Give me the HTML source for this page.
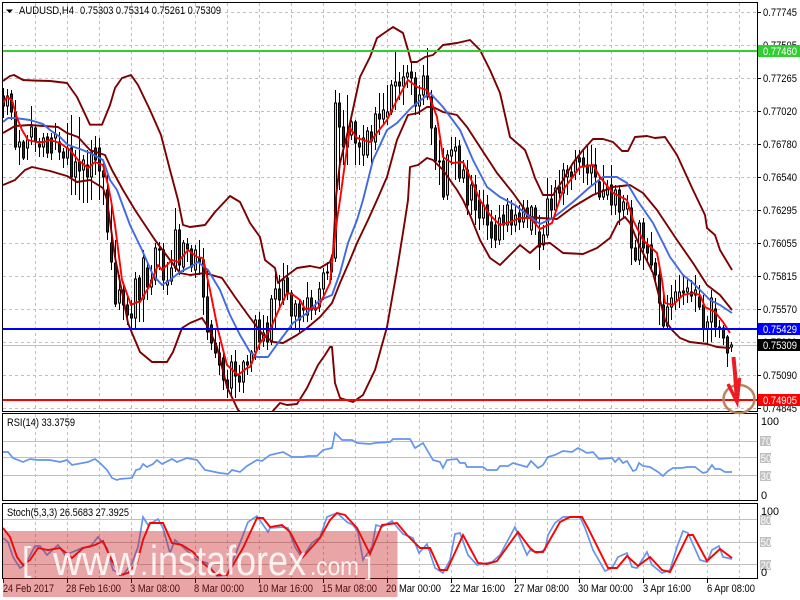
<!DOCTYPE html>
<html><head><meta charset="utf-8"><style>
html,body{margin:0;padding:0;background:#fff}
svg{display:block}
text{font-family:"Liberation Sans",sans-serif;font-size:11px;fill:#000}
.w{fill:#fff}
</style></head><body>
<svg width="800" height="600" viewBox="0 0 800 600" xmlns="http://www.w3.org/2000/svg" style="overflow:hidden">
<defs><clipPath id="m"><rect x="3" y="3" width="754" height="408"/></clipPath></defs>
<rect width="800" height="600" fill="#fff"/>
<!-- grid -->
<g stroke="#c0c0c0" fill="none" stroke-dasharray="3 3" shape-rendering="crispEdges">
<path d="M3 12.5H757M3 45.5H757M3 78.5H757M3 111.5H757M3 144.5H757M3 177.5H757M3 210.5H757M3 243.5H757M3 276.5H757M3 309.5H757M3 342.5H757M3 375.5H757M3 408.5H757"/>
<path d="M35.5 3V411M67.5 3V411M99.5 3V411M131.5 3V411M163.5 3V411M195.5 3V411M227.5 3V411M259.5 3V411M291.5 3V411M323.5 3V411M355.5 3V411M387.5 3V411M419.5 3V411M451.5 3V411M483.5 3V411M515.5 3V411M547.5 3V411M579.5 3V411M611.5 3V411M643.5 3V411M675.5 3V411M707.5 3V411M739.5 3V411"/>
<path d="M35.5 414V500M67.5 414V500M99.5 414V500M131.5 414V500M163.5 414V500M195.5 414V500M227.5 414V500M259.5 414V500M291.5 414V500M323.5 414V500M355.5 414V500M387.5 414V500M419.5 414V500M451.5 414V500M483.5 414V500M515.5 414V500M547.5 414V500M579.5 414V500M611.5 414V500M643.5 414V500M675.5 414V500M707.5 414V500M739.5 414V500"/>
<path d="M35.5 504V578M67.5 504V578M99.5 504V578M131.5 504V578M163.5 504V578M195.5 504V578M227.5 504V578M259.5 504V578M291.5 504V578M323.5 504V578M355.5 504V578M387.5 504V578M419.5 504V578M451.5 504V578M483.5 504V578M515.5 504V578M547.5 504V578M579.5 504V578M611.5 504V578M643.5 504V578M675.5 504V578M707.5 504V578M739.5 504V578"/>
</g>
<path d="M3 345.5H757" stroke="#c0c0c0" shape-rendering="crispEdges"/>
<!-- levels -->
<g stroke="#c0c0c0" stroke-width="1" shape-rendering="crispEdges">
<path d="M3 441.5H757M3 457.5H757M3 475.5H757M3 519.5H757M3 542.5H757M3 564.5H757"/>
</g>
<!-- candles -->
<g clip-path="url(#m)" shape-rendering="crispEdges">
<path fill="none" stroke="#000" d="M3.5 88V118M7.5 89V115M11.5 90V120M15.5 100V150M19.5 130V165M23.5 140V160M27.5 135V160M31.5 106V145M35.5 125V152M39.5 138V157M43.5 133V157M47.5 133V158M51.5 133V160M55.5 123V150M59.5 132V160M63.5 148V168M67.5 123V165M71.5 115V195M75.5 150V195M79.5 117V200M83.5 155V203M87.5 150V203M91.5 140V200M95.5 136V175M99.5 138V200M103.5 160V205M107.5 175V240M111.5 205V270M115.5 240V307M119.5 275V310M123.5 282V320M127.5 295V325M131.5 300V328M135.5 272V329M139.5 275V322M143.5 250V322M147.5 262V300M151.5 265V295M155.5 243V285M159.5 242V270M163.5 243V290M167.5 262V295M171.5 250V285M175.5 208V272M179.5 224V275M183.5 240V272M187.5 238V262M191.5 245V272M195.5 245V278M199.5 240V275M203.5 248V315M207.5 270V340M211.5 320V350M215.5 330V358M219.5 342V375M223.5 350V390M227.5 370V398M231.5 355V398M235.5 350V398M239.5 365V392M243.5 360V393M247.5 355V375M251.5 350V372M255.5 315V360M259.5 312V350M263.5 315V347M267.5 316V350M271.5 295V345M275.5 268V330M279.5 275V310M283.5 263V305M287.5 265V300M291.5 290V330M295.5 300V330M299.5 300V332M303.5 300V322M307.5 282V322M311.5 290V320M315.5 300V315M319.5 282V312M323.5 268V300M327.5 262V280M331.5 255V280M335.5 90V262M339.5 93V190M343.5 110V165M347.5 95V165M351.5 120V140M355.5 120V165M359.5 135V165M363.5 125V166M367.5 127V158M371.5 125V163M375.5 107V150M379.5 93V135M383.5 93V125M387.5 85V125M391.5 80V115M395.5 52V110M399.5 72V100M403.5 65V105M407.5 65V88M411.5 62V95M415.5 72V115M419.5 85V115M423.5 65V105M427.5 48V100M431.5 90V145M435.5 125V170M439.5 140V185M443.5 148V200M447.5 150V200M451.5 137V165M455.5 137V180M459.5 140V182M463.5 160V183M467.5 160V215M471.5 175V215M475.5 175V225M479.5 190V230M483.5 190V225M487.5 195V240M491.5 210V248M495.5 215V248M499.5 205V245M503.5 205V240M507.5 198V232M511.5 200V235M515.5 205V232M519.5 205V230M523.5 200V228M527.5 200V228M531.5 205V235M535.5 205V235M539.5 215V270M543.5 225V250M547.5 178V238M551.5 185V218M555.5 180V215M559.5 170V200M563.5 163V205M567.5 165V195M571.5 165V190M575.5 150V180M579.5 150V175M583.5 150V183M587.5 145V185M591.5 145V185M595.5 148V195M599.5 175V200M603.5 165V200M607.5 180V200M611.5 165V215M615.5 185V215M619.5 185V225M623.5 195V218M627.5 195V215M631.5 200V265M635.5 240V262M639.5 220V265M643.5 218V270M647.5 238V262M651.5 232V272M655.5 258V285M659.5 270V325M663.5 295V330M667.5 295V330M671.5 285V320M675.5 280V310M679.5 275V308M683.5 275V305M687.5 278V303M691.5 280V302M695.5 275V312M699.5 285V310M703.5 295V342M707.5 316V345M711.5 290V342M715.5 298V337M719.5 320V338M723.5 325V345M727.5 335V367M731.5 342V352"/>
<path fill="#adff2f" stroke="#000" d="M6.5 96h2V106h-2zM18.5 142h2V147h-2zM26.5 140h2V148h-2zM30.5 127h2V137h-2zM42.5 138h2V147h-2zM54.5 134h2V138h-2zM66.5 148h2V158h-2zM74.5 162h2V177h-2zM82.5 160h2V170h-2zM90.5 152h2V177h-2zM118.5 290h2V303h-2zM134.5 279h2V318h-2zM142.5 258h2V299h-2zM150.5 280h2V287h-2zM154.5 248h2V280h-2zM166.5 281h2V285h-2zM170.5 268h2V281h-2zM174.5 230h2V268h-2zM182.5 243h2V267h-2zM194.5 250h2V270h-2zM230.5 362h2V388h-2zM242.5 362h2V382h-2zM250.5 352h2V363h-2zM254.5 320h2V352h-2zM262.5 333h2V341h-2zM270.5 299h2V342h-2zM274.5 289h2V299h-2zM282.5 280h2V300h-2zM294.5 304h2V316h-2zM306.5 298h2V315h-2zM314.5 308h2V310h-2zM318.5 289h2V307h-2zM322.5 273h2V289h-2zM330.5 260h2V272h-2zM334.5 103h2V258h-2zM346.5 135h2V147h-2zM350.5 122h2V135h-2zM362.5 138h2V155h-2zM366.5 131h2V155h-2zM374.5 114h2V142h-2zM382.5 110h2V119h-2zM386.5 112h2V117h-2zM390.5 85h2V112h-2zM394.5 82h2V86h-2zM402.5 77h2V86h-2zM406.5 73h2V77h-2zM418.5 95h2V106h-2zM422.5 76h2V95h-2zM446.5 155h2V195h-2zM450.5 150h2V156h-2zM454.5 147h2V151h-2zM462.5 170h2V178h-2zM470.5 185h2V200h-2zM482.5 205h2V218h-2zM498.5 218h2V240h-2zM506.5 205h2V225h-2zM514.5 215h2V225h-2zM522.5 208h2V222h-2zM530.5 207h2V230h-2zM542.5 235h2V245h-2zM546.5 199h2V235h-2zM554.5 188h2V210h-2zM562.5 170h2V193h-2zM566.5 170h2V177h-2zM574.5 160h2V172h-2zM590.5 165h2V173h-2zM602.5 190h2V197h-2zM606.5 187h2V195h-2zM614.5 190h2V205h-2zM622.5 202h2V210h-2zM626.5 203h2V209h-2zM638.5 223h2V260h-2zM666.5 307h2V326h-2zM670.5 298h2V307h-2zM674.5 292h2V302h-2zM678.5 292h2V298h-2zM686.5 288h2V292h-2zM694.5 290h2V295h-2zM706.5 322h2V329h-2zM710.5 298h2V322h-2zM730.5 345h2V347h-2z"/>
<path fill="#8b0000" stroke="#000" d="M2.5 96h2V106h-2zM10.5 94h2V112h-2zM14.5 112h2V147h-2zM22.5 142h2V158h-2zM34.5 128h2V142h-2zM38.5 144h2V147h-2zM46.5 137h2V153h-2zM50.5 138h2V153h-2zM58.5 142h2V152h-2zM62.5 152h2V158h-2zM70.5 148h2V177h-2zM78.5 162h2V171h-2zM86.5 165h2V177h-2zM94.5 148h2V160h-2zM98.5 148h2V171h-2zM102.5 171h2V177h-2zM106.5 190h2V232h-2zM110.5 243h2V262h-2zM114.5 263h2V304h-2zM122.5 290h2V305h-2zM126.5 305h2V315h-2zM130.5 314h2V318h-2zM138.5 278h2V300h-2zM146.5 268h2V287h-2zM158.5 249h2V250h-2zM162.5 250h2V280h-2zM178.5 230h2V265h-2zM186.5 244h2V249h-2zM190.5 249h2V267h-2zM198.5 258h2V262h-2zM202.5 260h2V297h-2zM206.5 297h2V332h-2zM210.5 325h2V343h-2zM214.5 343h2V353h-2zM218.5 353h2V365h-2zM222.5 358h2V380h-2zM226.5 380h2V388h-2zM234.5 362h2V376h-2zM238.5 376h2V382h-2zM246.5 362h2V365h-2zM258.5 320h2V342h-2zM266.5 323h2V342h-2zM278.5 289h2V300h-2zM286.5 278h2V292h-2zM290.5 293h2V316h-2zM298.5 304h2V320h-2zM302.5 308h2V310h-2zM310.5 298h2V310h-2zM326.5 272h2V273h-2zM338.5 103h2V127h-2zM342.5 127h2V147h-2zM354.5 122h2V143h-2zM358.5 143h2V147h-2zM370.5 132h2V141h-2zM378.5 114h2V119h-2zM398.5 82h2V86h-2zM410.5 72h2V78h-2zM414.5 78h2V106h-2zM426.5 76h2V97h-2zM430.5 97h2V128h-2zM434.5 128h2V161h-2zM438.5 161h2V162h-2zM442.5 161h2V197h-2zM458.5 146h2V178h-2zM466.5 170h2V205h-2zM474.5 185h2V210h-2zM478.5 200h2V218h-2zM486.5 205h2V225h-2zM490.5 222h2V238h-2zM494.5 225h2V240h-2zM502.5 215h2V225h-2zM510.5 210h2V225h-2zM518.5 213h2V222h-2zM526.5 208h2V218h-2zM534.5 208h2V223h-2zM538.5 232h2V247h-2zM550.5 199h2V210h-2zM558.5 187h2V193h-2zM570.5 172h2V177h-2zM578.5 158h2V162h-2zM582.5 158h2V167h-2zM586.5 165h2V173h-2zM594.5 165h2V177h-2zM598.5 182h2V197h-2zM610.5 185h2V205h-2zM618.5 190h2V212h-2zM630.5 208h2V248h-2zM634.5 248h2V260h-2zM642.5 223h2V248h-2zM646.5 245h2V253h-2zM650.5 245h2V265h-2zM654.5 263h2V275h-2zM658.5 275h2V303h-2zM662.5 305h2V326h-2zM682.5 291h2V293h-2zM690.5 292h2V296h-2zM698.5 297h2V307h-2zM702.5 305h2V329h-2zM714.5 309h2V327h-2zM718.5 327h2V329h-2zM722.5 328h2V338h-2zM726.5 337h2V353h-2z"/>
</g>
<!-- bands and MAs -->
<g clip-path="url(#m)" fill="none" stroke-width="1.9" stroke-linejoin="round">
<g stroke="#7d0000">
<polyline points="3,81 10,76 14,75 23,80 33,80.5 50,81 67,83 77,97 90,124.7 102,124.7 110,105 115,88 122,78 131,75 138,85 150,110 161,135 170,170 178,200 183,225 190,227 205,225 215,212 230,196 240,202 250,223 260,237 265,260 275,268 278,283 285,277 297,268 310,266 320,268 330,262 333,253 336,197 340,163 350,123 360,77 370,57 377,38 393,27 403,33 408,50 411,62 417,62 425,57 433,55 443,45 457,43 470,40 480,50 490,70 500,93 510,137 525,150 530,163 535,178 543,195 553,195 563,180 573,163 583,150 593,139 603,139 613,142 622,151 628,151 635,137 647,136 655,138 665,137 677,155 693,190 705,215 707,228 715,235 720,250 732,270"/>
<polyline points="3,133 15,126 30,125 58,127 67,133 78,137 90,150 105,155 112,170 123,190 135,210 145,225 155,240 170,260 180,273 190,275 205,273 222,278 235,297 248,315 263,335 273,342 283,343 297,335 307,328 320,317 332,303 340,283 350,260 357,243 368,220 377,200 387,177 397,140 408,115 418,113 427,107 433,107 443,112 457,115 467,127 480,147 497,173 513,193 518,200 530,217 540,218 557,219 573,207 593,195 613,187 630,185 643,193 657,210 677,240 693,263 707,285 720,295 732,310"/>
<polyline points="3,185 15,180 25,170 32,167 50,171 67,176 77,182 90,180 103,188 107,200 115,257 123,297 128,323 132,333 140,352 152,362 167,362 173,352 182,328 190,323 202,318 208,327 217,347 227,387 238,410 250,420 272,412 280,403 287,405 297,404 307,388 318,365 325,355 330,347 332,347 335,383 340,398 353,402 363,395 375,370 387,327 397,270 405,220 408,200 410,167 418,165 427,158 433,160 443,170 457,190 463,200 470,215 480,240 490,258 500,265 510,255 520,245 530,253 540,244 550,243 563,253 583,254 597,248 610,238 618,222 625,217 630,223 640,247 653,273 660,300 665,320 672,330 680,338 690,342 707,344 717,347 730,348"/>
</g>
<polyline stroke="#4169e1" points="3,122 8,118 15,118 30,120 43,124 50,130 60,137 68,145 80,149 90,153 103,160 110,180 117,190 130,225 142,250 153,275 162,285 170,280 180,272 190,267 198,262 208,270 220,290 230,315 240,335 250,352 257,357 268,357 278,343 293,323 307,313 320,300 332,295 340,273 348,243 357,220 363,200 373,160 387,130 397,123 412,107 430,93 443,107 460,130 473,160 487,187 500,197 515,205 530,217 540,224 553,218 573,202 590,187 603,177 617,177 627,183 637,200 653,223 670,257 683,275 693,283 710,300 720,305 732,313"/>
<polyline stroke="#ff0000" points="3,103 7,97 12,100 17,118 22,130 28,140 36,142 44,142 50,140 60,143 70,150 78,160 88,168 95,162 103,165 108,185 111,200 115,225 122,280 131,305 137,302 140,302 150,285 158,265 162,270 172,260 178,262 188,250 197,257 203,258 210,290 218,330 227,365 238,375 247,368 250,367 260,343 270,330 280,307 287,293 292,294 300,300 305,309 318,308 330,283 332,263 337,220 340,200 345,163 350,128 357,138 370,142 387,120 397,100 408,80 417,87 427,90 437,117 443,157 452,163 463,162 470,177 480,200 490,215 500,225 510,222 520,218 530,218 540,229 552,223 563,190 580,167 593,165 600,177 613,193 627,200 633,220 643,240 657,253 662,280 665,303 673,305 683,295 693,293 700,295 705,307 715,312 723,322 730,333"/>
</g>
<!-- lines -->
<g shape-rendering="crispEdges">
<rect x="3" y="50" width="754" height="2" fill="#32cd32"/>
<rect x="3" y="328" width="754" height="2" fill="#0000ff"/>
<rect x="3" y="399" width="754" height="2" fill="#ff0000"/>
</g>
<!-- RSI -->
<polyline fill="none" stroke="#6495ed" stroke-width="1.7" points="3,452 8,452 13,458 23,462 30,459 37,460 50,460 60,462 67,460 72,465 88,462 95,459 100,463 107,470 112,478 117,480 120,479 132,478 136,470 140,469 143,464 147,467 153,464 157,460 162,464 172,459 177,462 187,458 197,460 205,470 220,473 228,474 232,470 240,472 247,466 257,460 262,461 270,455 283,452 292,457 303,457 308,456 317,456 323,450 332,448 335,433 342,440 352,440 357,443 370,444 375,443 390,442 393,439 410,439 415,448 423,443 433,460 440,462 443,468 447,460 457,459 460,463 465,463 467,467 483,467 487,470 497,470 500,466 508,466 513,463 527,467 531,461 538,468 543,465 548,457 555,455 563,451 572,452 578,448 587,453 593,452 599,459 612,458 615,462 619,458 623,463 627,461 633,471 636,470 639,463 643,466 650,467 658,472 663,476 668,471 673,468 682,468 687,467 695,467 703,473 707,472 712,465 715,469 720,469 725,472 732,472"/>
<!-- Stoch -->
<polyline fill="none" stroke="#6495ed" stroke-width="1.7" points="3,538 8,542 13,557 20,568 25,565 35,546 40,546 47,555 58,545 65,555 75,551 82,548 90,547 98,537 107,548 113,570 123,575 132,563 138,547 143,517 148,525 158,519 163,528 170,553 175,540 183,547 197,560 207,563 217,576 227,575 240,543 248,522 257,516 268,532 270,528 283,527 288,528 295,547 302,558 312,543 320,537 327,517 337,513 347,522 353,525 358,532 363,560 372,547 376,525 382,527 392,521 403,534 413,538 419,553 427,544 435,568 443,573 450,560 455,534 460,533 468,555 477,565 492,562 500,555 515,527 527,555 530,550 537,553 545,550 548,535 555,523 563,517 580,517 585,528 593,550 605,571 612,568 618,557 627,553 632,567 637,568 647,552 652,565 662,573 670,570 677,547 683,531 688,533 700,560 707,562 712,550 719,546 723,557 732,559"/>
<polyline fill="none" stroke="#ff0000" stroke-width="1.9" points="3,528 10,537 17,557 23,565 30,560 38,548 48,550 60,548 72,558 83,548 95,545 103,541 110,557 120,575 128,573 137,563 143,540 150,523 163,523 172,543 182,545 193,552 203,563 217,575 227,575 243,548 257,518 263,518 270,527 282,525 290,532 303,557 320,538 330,520 337,513 345,515 357,528 370,554 382,525 397,523 407,535 420,548 430,548 440,570 447,570 463,535 478,563 487,564 497,561 518,532 530,548 535,552 543,552 560,522 570,517 582,517 588,528 608,568 617,568 627,556 638,566 650,557 662,570 670,572 688,535 693,535 707,561 720,549 732,558"/>
<!-- frames -->
<g fill="none" stroke="#000" shape-rendering="crispEdges">
<path d="M2.5 2.5H757.5V411.5H2.5Z"/>
<path d="M2.5 413.5H757.5V500.5H2.5Z"/>
<path d="M2.5 503.5H757.5V578.5H2.5Z"/>
<path d="M758 12.5h3M758 45.5h3M758 78.5h3M758 111.5h3M758 144.5h3M758 177.5h3M758 210.5h3M758 243.5h3M758 276.5h3M758 309.5h3M758 342.5h3M758 375.5h3M758 408.5h3M3.5 579v4M67.5 579v4M131.5 579v4M195.5 579v4M259.5 579v4M323.5 579v4M387.5 579v4M451.5 579v4M515.5 579v4M579.5 579v4M643.5 579v4M707.5 579v4"/>
</g>
<!-- right labels -->
<text x="763" y="16" textLength="34" lengthAdjust="spacingAndGlyphs">0.77745</text>
<text x="763" y="49" textLength="34" lengthAdjust="spacingAndGlyphs">0.77505</text>
<text x="763" y="82" textLength="34" lengthAdjust="spacingAndGlyphs">0.77265</text>
<text x="763" y="115" textLength="34" lengthAdjust="spacingAndGlyphs">0.77020</text>
<text x="763" y="148" textLength="34" lengthAdjust="spacingAndGlyphs">0.76780</text>
<text x="763" y="181" textLength="34" lengthAdjust="spacingAndGlyphs">0.76540</text>
<text x="763" y="214" textLength="34" lengthAdjust="spacingAndGlyphs">0.76295</text>
<text x="763" y="247" textLength="34" lengthAdjust="spacingAndGlyphs">0.76055</text>
<text x="763" y="280" textLength="34" lengthAdjust="spacingAndGlyphs">0.75815</text>
<text x="763" y="313" textLength="34" lengthAdjust="spacingAndGlyphs">0.75570</text>
<text x="763" y="346" textLength="34" lengthAdjust="spacingAndGlyphs">0.75330</text>
<text x="763" y="379" textLength="34" lengthAdjust="spacingAndGlyphs">0.75090</text>
<text x="763" y="412" textLength="34" lengthAdjust="spacingAndGlyphs">0.74845</text>
<rect x="758" y="45" width="42" height="12" fill="#32cd32"/>
<text class="w" x="763" y="55" textLength="34" lengthAdjust="spacingAndGlyphs">0.77460</text>
<rect x="758" y="323" width="42" height="12" fill="#0000ff"/>
<text class="w" x="763" y="333" textLength="34" lengthAdjust="spacingAndGlyphs">0.75429</text>
<rect x="758" y="339" width="42" height="12" fill="#000"/>
<text class="w" x="763" y="349" textLength="34" lengthAdjust="spacingAndGlyphs">0.75309</text>
<rect x="758" y="394" width="42" height="12" fill="#ff0000"/>
<text class="w" x="763" y="404" textLength="34" lengthAdjust="spacingAndGlyphs">0.74905</text>
<!-- RSI/Stoch axis -->
<text x="761" y="425" textLength="18" lengthAdjust="spacingAndGlyphs">100</text>
<rect x="760" y="436" width="11" height="10" fill="#c0c0c0"/><text class="w" x="760.500" y="445" textLength="11" lengthAdjust="spacingAndGlyphs">70</text>
<rect x="760" y="453" width="11" height="10" fill="#c0c0c0"/><text class="w" x="760.500" y="462" textLength="11" lengthAdjust="spacingAndGlyphs">50</text>
<rect x="760" y="471" width="11" height="10" fill="#c0c0c0"/><text class="w" x="760.500" y="480" textLength="11" lengthAdjust="spacingAndGlyphs">30</text>
<text x="761" y="499">0</text>
<text x="761" y="515" textLength="18" lengthAdjust="spacingAndGlyphs">100</text>
<rect x="760" y="515" width="11" height="10" fill="#c0c0c0"/><text class="w" x="760.500" y="524" textLength="11" lengthAdjust="spacingAndGlyphs">80</text>
<rect x="760" y="537" width="11" height="10" fill="#c0c0c0"/><text class="w" x="760.500" y="546" textLength="11" lengthAdjust="spacingAndGlyphs">50</text>
<rect x="760" y="560" width="11" height="10" fill="#c0c0c0"/><text class="w" x="760.500" y="569" textLength="11" lengthAdjust="spacingAndGlyphs">20</text>
<text x="761" y="576">0</text>
<!-- titles -->
<path d="M6 9.500h7l-3.500 3.500z" fill="#000"/>
<text x="19" y="14" textLength="55" lengthAdjust="spacingAndGlyphs">AUDUSD,H4</text>
<text x="80" y="14" textLength="141" lengthAdjust="spacingAndGlyphs">0.75303 0.75314 0.75261 0.75309</text>
<text x="7" y="426" textLength="68" lengthAdjust="spacingAndGlyphs">RSI(14) 33.3759</text>
<text x="7" y="516" textLength="122" lengthAdjust="spacingAndGlyphs">Stoch(5,3,3) 26.5683 27.3925</text>
<!-- dates -->
<text x="3" y="592" textLength="51" lengthAdjust="spacingAndGlyphs">24 Feb 2017</text>
<text x="66" y="592" textLength="55" lengthAdjust="spacingAndGlyphs">28 Feb 16:00</text>
<text x="130" y="592" textLength="50" lengthAdjust="spacingAndGlyphs">3 Mar 08:00</text>
<text x="194" y="592" textLength="50" lengthAdjust="spacingAndGlyphs">8 Mar 00:00</text>
<text x="258" y="592" textLength="55" lengthAdjust="spacingAndGlyphs">10 Mar 16:00</text>
<text x="322" y="592" textLength="55" lengthAdjust="spacingAndGlyphs">15 Mar 08:00</text>
<text x="386" y="592" textLength="55" lengthAdjust="spacingAndGlyphs">20 Mar 00:00</text>
<text x="450" y="592" textLength="55" lengthAdjust="spacingAndGlyphs">22 Mar 16:00</text>
<text x="514" y="592" textLength="55" lengthAdjust="spacingAndGlyphs">27 Mar 08:00</text>
<text x="578" y="592" textLength="55" lengthAdjust="spacingAndGlyphs">30 Mar 00:00</text>
<text x="643" y="592" textLength="48" lengthAdjust="spacingAndGlyphs">3 Apr 16:00</text>
<text x="707" y="592" textLength="48" lengthAdjust="spacingAndGlyphs">6 Apr 08:00</text>
<!-- annotation -->
<ellipse cx="739" cy="399" rx="15.500" ry="14" fill="none" stroke="#b8865e" stroke-width="2.500"/>
<path d="M733.500 357L735 373L737 402" fill="none" stroke="#ed1c24" stroke-width="4"/>
<path d="M728 384L737 402L739.500 378" fill="none" stroke="#ed1c24" stroke-width="3.500"/>
<!-- watermark -->
<rect x="3" y="531" width="394.500" height="66" fill="#c81e1e" fill-opacity=".4"/>
<g style="font-family:'Liberation Sans',sans-serif">
<text x="22" y="571" style="font-size:34px;fill:#fff;fill-opacity:.85">[</text>
<text x="53" y="575" textLength="87" lengthAdjust="spacingAndGlyphs" style="font-size:42px;fill:#fff;fill-opacity:.85">www</text>
<text x="140" y="575" style="font-size:30px;fill:#fff;fill-opacity:.85">.</text>
<text x="150" y="575" textLength="156" lengthAdjust="spacingAndGlyphs" style="font-size:42px;fill:#fff;fill-opacity:.85">instaforex</text>
<text x="310" y="575" textLength="49" lengthAdjust="spacingAndGlyphs" style="font-size:26px;fill:#fff;fill-opacity:.85">.com</text>
<text x="365" y="575" style="font-size:25px;fill:#fff;fill-opacity:.85">]</text>
</g>
</svg>
</body></html>
